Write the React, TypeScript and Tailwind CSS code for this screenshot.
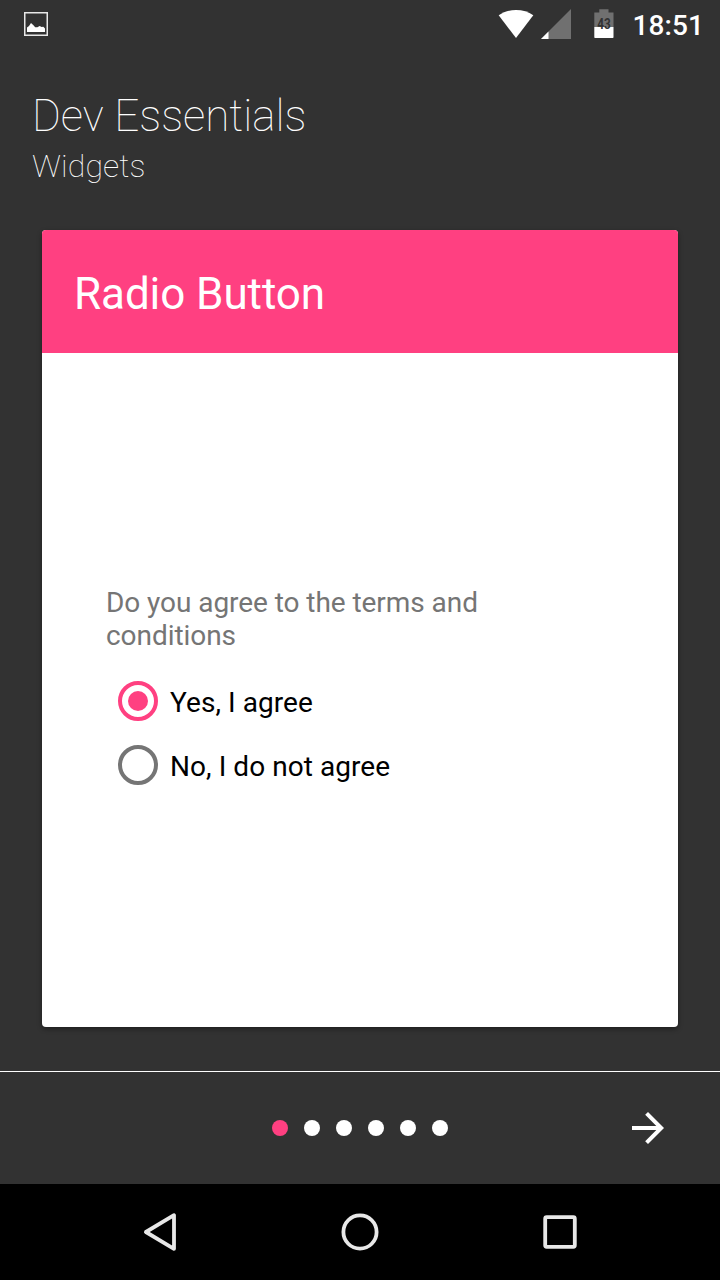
import { FC, useState } from 'react';

const PAGE_COUNT = 6;

const OPTIONS = [
  { id: 'yes', label: 'Yes, I agree' },
  { id: 'no', label: 'No, I do not agree' },
];

const StatusBar: FC = () => (
  <div className="flex h-12 shrink-0 items-center pl-6 pr-4">
    <svg width="24" height="24" viewBox="0 0 24 24" aria-hidden="true">
      <rect x="0.75" y="0.75" width="22.5" height="22.5" fill="none" stroke="#e8e8e8" strokeWidth="1.5" />
      <path d="M3 20v-4.500l2-1.500 2-3 2.200 2 2 2.300h2.200l2.200-1.300 2 1 1.800-.2 1.600 1.700V20z" fill="#fff" />
    </svg>

    <div className="ml-auto flex items-center">
      {/* Wifi */}
      <svg width="36" height="30" viewBox="0 0 36 30" aria-hidden="true">
        <path d="M18 29 .7 6.300C5.500 2.900 11.500 1 18 1s12.500 1.900 17.300 5.300z" fill="#fff" />
      </svg>
      {/* Mobile signal */}
      <svg className="ml-[7px]" width="30" height="30" viewBox="0 0 30 30" aria-hidden="true">
        <path d="M30 0v30H0z" fill="#707070" />
        <path d="M7.500 22.500V30H0z" fill="#fff" />
      </svg>
      {/* Battery */}
      <div className="relative ml-[22.500px] h-[30px] w-5">
        <svg className="block" width="20" height="30" viewBox="0 0 20 30" aria-hidden="true">
          <path d="M0.300 3.500h5V.3h9.200v3.200h5V18H.3z" fill="#707070" />
          <path d="M0.300 18h19.200v10.300a.7.700 0 0 1-.7.700H1a.7.700 0 0 1-.7-.7z" fill="#fff" />
        </svg>
        <span className="absolute inset-x-0 top-[7px] scale-x-[0.78] text-center text-[15px] font-bold leading-4 text-[#323232]">
          43
        </span>
      </div>
      <span className="ml-[18.500px] mt-[3px] text-[28px] font-medium leading-[33px] tracking-[0.1px] text-white">
        18:51
      </span>
    </div>
  </div>
);

interface RadioProps {
  label: string;
  checked: boolean;
  onSelect: () => void;
}

const Radio: FC<RadioProps> = ({ label, checked, onSelect }) => (
  <button
    type="button"
    role="radio"
    aria-checked={checked}
    onClick={onSelect}
    className="flex h-16 items-center pl-3 text-left"
  >
    <span
      className={`flex size-10 items-center justify-center rounded-full border-4 ${
        checked ? 'border-[#ff4081]' : 'border-[#757575]'
      }`}
    >
      {checked && <span className="size-5 rounded-full bg-[#ff4081]" />}
    </span>
    <span className="ml-3 pt-[3px] text-[28px] leading-[33px] tracking-[0.06px] text-black">{label}</span>
  </button>
);

const NavigationBar: FC = () => (
  <nav className="flex h-24 shrink-0 items-center justify-center gap-40 bg-black">
    <svg width="40" height="40" viewBox="0 0 40 40" fill="none" stroke="#e8e8e8" strokeWidth="3.800" strokeLinejoin="round">
      <path d="M34 3.200v33.600L5.900 20z" />
    </svg>
    <svg width="40" height="40" viewBox="0 0 40 40" fill="none" stroke="#e8e8e8" strokeWidth="3.800">
      <circle cx="20" cy="20" r="16.600" />
    </svg>
    <svg width="40" height="40" viewBox="0 0 40 40" fill="none" stroke="#e8e8e8" strokeWidth="3.800">
      <rect x="5.200" y="5.200" width="29.600" height="29.600" rx="1.500" />
    </svg>
  </nav>
);

const App: FC = () => {
  const [page, setPage] = useState(0);
  const [selected, setSelected] = useState('yes');

  return (
    <div className="flex h-screen min-h-[1280px] w-full flex-col bg-[#323232] font-['Roboto',sans-serif]">
      <StatusBar />

      <header className="px-8 pt-[42px] font-thin text-white">
        <h1 className="text-[44px] leading-[52px]">Dev Essentials</h1>
        <h2 className="mt-[5px] text-[32px] leading-[38px] tracking-[0.1px]">Widgets</h2>
      </header>

      <main className="mx-[42px] mb-11 mt-[45px] flex flex-1 flex-col overflow-hidden rounded bg-white shadow-[0_2px_5px_rgba(0,0,0,0.4)]">
        <div className="flex h-[123px] shrink-0 items-center bg-[#ff4081] px-8 pt-1">
          <h3 className="text-[44px] leading-[52px] tracking-[-0.08px] text-white">Radio Button</h3>
        </div>

        <div className="flex flex-1 flex-col justify-center px-16 pt-[3px]">
          <p className="text-[28px] leading-[33px] tracking-[-0.06px] text-[#757575]">
            Do you agree to the terms and conditions
          </p>
          <div role="radiogroup" className="mt-[17px] flex flex-col">
            {OPTIONS.map((option) => (
              <Radio
                key={option.id}
                label={option.label}
                checked={selected === option.id}
                onSelect={() => setSelected(option.id)}
              />
            ))}
          </div>
        </div>
      </main>

      <footer className="grid h-[113px] shrink-0 grid-cols-3 items-center border-t border-white">
        <div className="col-start-2 flex justify-center gap-4">
          {Array.from({ length: PAGE_COUNT }, (_, i) => (
            <span key={i} className={`size-4 rounded-full ${i === page ? 'bg-[#ff4081]' : 'bg-white'}`} />
          ))}
        </div>
        <button
          type="button"
          aria-label="Next"
          className="mr-12 justify-self-end"
          onClick={() => setPage((page + 1) % PAGE_COUNT)}
        >
          <svg width="48" height="48" viewBox="0 0 24 24" fill="#fff">
            <path d="M12 4l-1.410 1.410L16.170 11H4v2h12.170l-5.580 5.590L12 20l8-8z" />
          </svg>
        </button>
      </footer>

      <NavigationBar />
    </div>
  );
};

export default App;
